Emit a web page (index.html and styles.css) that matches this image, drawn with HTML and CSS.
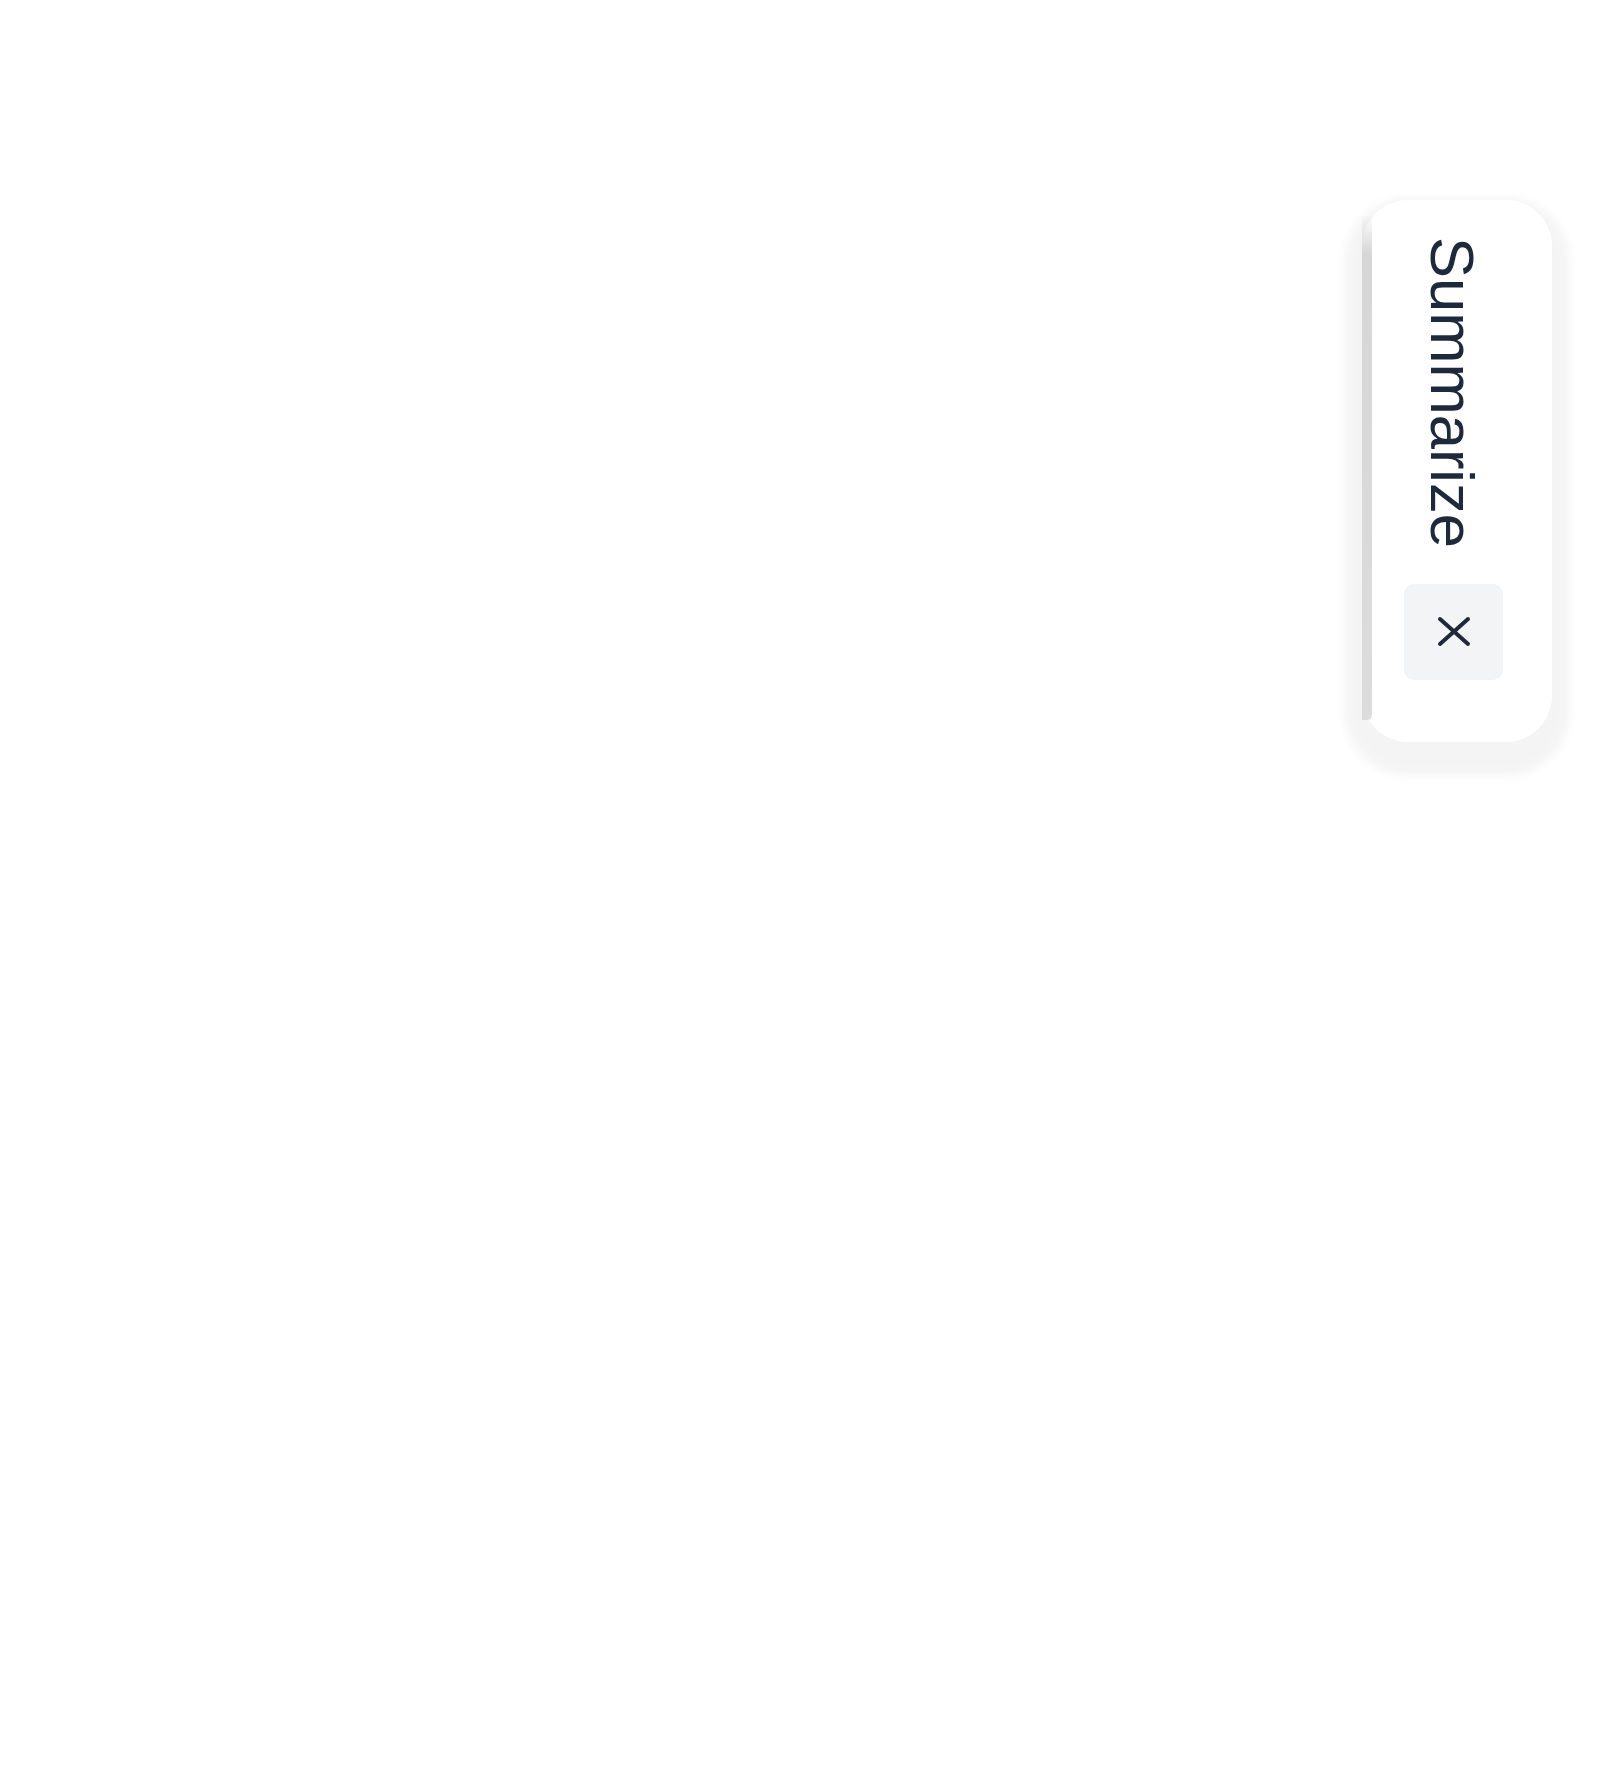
FILE: index.html
```html
<!DOCTYPE html>
<html lang="en">
<head>
<meta charset="utf-8">
<title>Summarize</title>
<link rel="stylesheet" href="styles.css">
</head>
<body>
<aside class="tab">
  <span class="tab-edge"></span>
  <span class="tab-label">Summarize</span>
  <button class="tab-close" type="button" aria-label="Close">
    <svg width="34" height="31" viewBox="0 0 34 31" fill="none" stroke="currentColor" stroke-width="4" stroke-linecap="round">
      <path d="M3 3 L31 28 M31 3 L3 28"/>
    </svg>
  </button>
</aside>
</body>
</html>
```
FILE: styles.css
```css
html, body {
  margin: 0;
  padding: 0;
  background: #ffffff;
}
body {
  width: 1600px;
  height: 1776px;
  font-family: "Liberation Sans", Arial, sans-serif;
}
.tab {
  position: absolute;
  left: 1362px;
  top: 200px;
  width: 190px;
  height: 542px;
  box-sizing: border-box;
  background: #ffffff;
  border-radius: 46px;
  box-shadow: 0 16px 10px 18px rgba(0, 0, 0, 0.045);
  display: flex;
  flex-direction: column;
  align-items: center;
  padding-top: 37px;
  gap: 36px;
}
.tab-edge {
  position: absolute;
  left: 0;
  top: 14px;
  bottom: 22px;
  width: 10px;
  background: linear-gradient(to bottom, rgba(214, 214, 214, 0) 0, #d6d6d6 40px, #dcdcdc 100%);
  border-radius: 0 0 5px 0;
}
.tab-label {
  writing-mode: vertical-rl;
  font-size: 61.5px;
  line-height: 1;
  color: #1e293b;
  margin-right: 10px;
}
.tab-close {
  width: 99px;
  height: 96px;
  margin-right: 7px;
  border: 0;
  padding: 0;
  border-radius: 10px;
  background: #f3f4f6;
  color: #1e293b;
  display: flex;
  align-items: center;
  justify-content: center;
  cursor: pointer;
}
```
